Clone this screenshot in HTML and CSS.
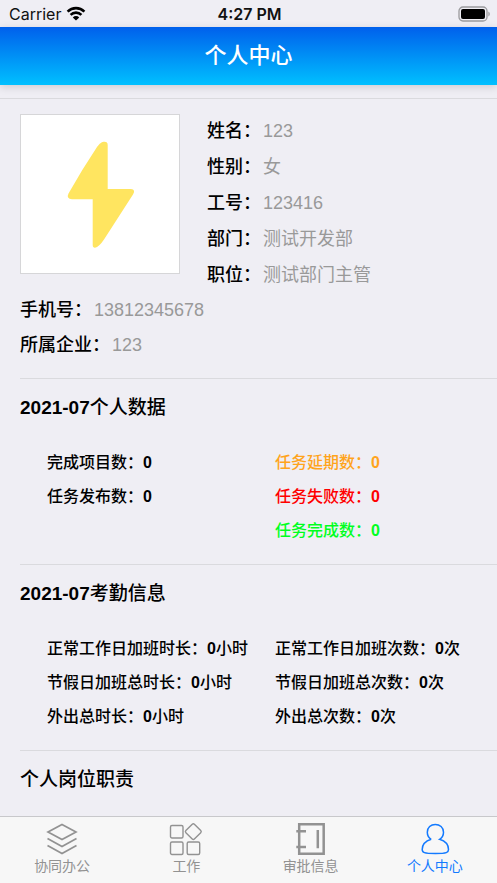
FILE: index.html
```html
<!DOCTYPE html>
<html lang="zh-CN">
<head>
<meta charset="utf-8">
<meta name="viewport" content="width=device-width, initial-scale=1">
<title>个人中心</title>
<link rel="stylesheet" href="styles.css">
</head>
<body>
<div class="status">
  <div class="status-left">
    <span>Carrier</span>
    <svg class="wifi" viewBox="0 0 20 15" aria-hidden="true">
      <path d="M1.6 5.600a12 12 0 0 1 16.800 0M4.600 8.900a7.600 7.600 0 0 1 10.800 0" fill="none" stroke="#000" stroke-width="2.600"/>
      <path d="M10 14.600l-3.200-3.200a4.500 4.500 0 0 1 6.400 0z"/>
    </svg>
  </div>
  <time class="clock">4:27 PM</time>
  <div class="status-right">
    <svg class="battery" viewBox="0 0 32 16" aria-hidden="true">
      <rect x="1" y="1" width="28" height="14" rx="4" fill="none" stroke="#9a9a9d" stroke-width="1.3"/>
      <rect x="3" y="3" width="24" height="10" rx="2"/>
      <path d="M30.4 5.600q1.400.8 1.400 2.400t-1.400 2.400z" fill="#9a9a9d"/>
    </svg>
  </div>
</div>

<header class="header"><h1>个人中心</h1></header>

<main class="content">
  <section class="profile">
    <div class="profile-top">
      <svg class="avatar" viewBox="0 0 160 160" role="img" aria-label="头像">
        <path d="M77 33C80 29 82 27.700 84.500 27.700Q87.700 27.700 87.700 31V75H111Q116 75.500 113 80.500L84 125.500Q79 133 75 133.700Q72.700 133.700 72.700 131V85.300H52Q46 84.500 48.500 79.500Q62 55.500 77 33Z" fill="#ffe560"/>
      </svg>
      <dl class="facts">
        <div><dt>姓名：</dt><dd>123</dd></div>
        <div><dt>性别：</dt><dd>女</dd></div>
        <div><dt>工号：</dt><dd>123416</dd></div>
        <div><dt>部门：</dt><dd>测试开发部</dd></div>
        <div><dt>职位：</dt><dd>测试部门主管</dd></div>
      </dl>
    </div>
    <dl class="facts facts-wide">
      <div><dt>手机号：</dt><dd>13812345678</dd></div>
      <div><dt>所属企业：</dt><dd>123</dd></div>
    </dl>
  </section>

  <section class="panel">
    <h2><b>2021-07</b>个人数据</h2>
    <div class="stats">
      <ul>
        <li>完成项目数：<b>0</b></li>
        <li>任务发布数：<b>0</b></li>
      </ul>
      <ul>
        <li class="delayed">任务延期数：<b>0</b></li>
        <li class="failed">任务失败数：<b>0</b></li>
        <li class="done">任务完成数：<b>0</b></li>
      </ul>
    </div>
  </section>

  <section class="panel">
    <h2><b>2021-07</b>考勤信息</h2>
    <div class="stats">
      <ul>
        <li>正常工作日加班时长：<b>0</b>小时</li>
        <li>节假日加班总时长：<b>0</b>小时</li>
        <li>外出总时长：<b>0</b>小时</li>
      </ul>
      <ul>
        <li>正常工作日加班次数：<b>0</b>次</li>
        <li>节假日加班总次数：<b>0</b>次</li>
        <li>外出总次数：<b>0</b>次</li>
      </ul>
    </div>
  </section>

  <section class="panel">
    <h2>个人岗位职责</h2>
  </section>
</main>

<nav class="tabs">
  <a href="#office">
    <svg viewBox="0 0 34 34" aria-hidden="true"><path d="M17 2.500L31 10L17 17.500L3 10ZM2.500 16.500L17 24.500L31.500 16.500M2.500 23.500L17 31.500L31.500 23.500" stroke-width="1.700"/></svg>
    <span>协同办公</span>
  </a>
  <a href="#work">
    <svg viewBox="0 0 34 34" aria-hidden="true"><g stroke-width="1.400"><rect x="1.500" y="3.500" width="12.500" height="12.500" rx="1.500"/><rect x="1.500" y="20" width="12.500" height="12.500" rx="1.500"/><rect x="18.200" y="20" width="12.500" height="12.500" rx="1.500"/><rect x="18.300" y="3.600" width="12" height="12" rx="1.500" transform="rotate(45 24.300 9.600)"/></g></svg>
    <span>工作</span>
  </a>
  <a href="#approval">
    <svg viewBox="0 0 34 34" aria-hidden="true"><path d="M5.200 2.200H29.700V31.700H5.200ZM2.300 9.300H12M2.300 25H12M23.800 8V26.300" stroke-width="2.500"/></svg>
    <span>审批信息</span>
  </a>
  <a href="#me" class="active" aria-current="page">
    <svg viewBox="0 0 34 34" aria-hidden="true"><path d="M13.200 17.300C10.300 15.500 9.300 13 9.300 10.200C9.300 5.500 12.800 2.400 17.300 2.400S25.500 5.500 25.500 10.200C25.500 13 24.500 15.500 21.600 17.300C27 19 30.500 22.500 30.500 27.500C30.500 30.500 29 31.500 17.400 31.500S4.200 30.500 4.200 27.500C4.200 22.500 7.800 19 13.200 17.300" stroke-width="1.500"/></svg>
    <span>个人中心</span>
  </a>
</nav>
</body>
</html>
```

FILE: styles.css
```css
* {
  box-sizing: border-box;
}

body {
  margin: 0;
  min-height: 100vh;
  display: flex;
  flex-direction: column;
  background: #efeef4;
  color: #000;
  font-family: "Liberation Sans", "Noto Sans CJK SC", sans-serif;
}

h1, h2, dl, dd, ul {
  margin: 0;
  padding: 0;
}

ul {
  list-style: none;
}

.status {
  display: grid;
  grid-template-columns: 1fr auto 1fr;
  align-items: center;
  height: 27px;
  padding: 0 7px 0 9px;
  font-family: Inter, sans-serif;
  font-size: 16px;
  color: #111;
}

.status-left {
  display: flex;
  align-items: center;
  gap: 5px;
}

.status-right {
  display: flex;
  justify-content: flex-end;
}

.wifi {
  width: 20px;
  height: 15px;
}

.battery {
  width: 32px;
  height: 16px;
}

.clock {
  font-weight: 600;
}

.header {
  background: linear-gradient(#0060ec, #00c0ff);
  box-shadow: 0 2px 8px rgba(0, 0, 0, 0.15);
}

.header h1 {
  color: #fff;
  font-size: 22px;
  font-weight: 500;
  line-height: 58px;
  text-align: center;
}

.content {
  flex: 1;
  margin-top: 13px;
  border-top: 1px solid #dadade;
}

.profile {
  padding: 14px 20px 15px;
}

.profile-top {
  display: flex;
  align-items: flex-start;
  gap: 27px;
}

.avatar {
  flex: none;
  width: 160px;
  height: 160px;
  margin-top: 1px;
  background: #fff;
  outline: 1px solid #d6d6d8;
  outline-offset: -1px;
}

.facts {
  font-size: 18px;
  line-height: 36px;
}

.facts div {
  display: flex;
  gap: 2px;
}

.facts dt {
  font-weight: 500;
}

.facts dd {
  color: #999;
}

.facts-wide {
  line-height: 35px;
}

.panel {
  margin-left: 20px;
  padding-bottom: 16px;
  border-top: 1px solid #dadade;
}

.panel:last-child {
  padding-bottom: 0;
}

.panel h2 {
  font-size: 19px;
  font-weight: 500;
  line-height: 58px;
}

.stats {
  display: grid;
  grid-template-columns: 1fr 1fr;
  column-gap: 6px;
  padding: 9px 0 0 27px;
  font-size: 16px;
  font-weight: 500;
  line-height: 34px;
}

.delayed {
  color: #ffa41c;
}

.failed {
  color: #f00;
}

.done {
  color: #00ff1e;
}

.tabs {
  display: grid;
  grid-template-columns: repeat(4, 1fr);
  height: 67px;
  padding-top: 5px;
  border-top: 1px solid #c8c8cb;
  background: #f7f7f7;
}

.tabs a {
  display: flex;
  flex-direction: column;
  align-items: center;
  color: #929292;
  font-size: 14px;
  line-height: 20px;
  text-decoration: none;
}

.tabs svg {
  width: 34px;
  height: 34px;
  fill: none;
  stroke: currentColor;
}

.tabs .active {
  color: #137aff;
}
```
